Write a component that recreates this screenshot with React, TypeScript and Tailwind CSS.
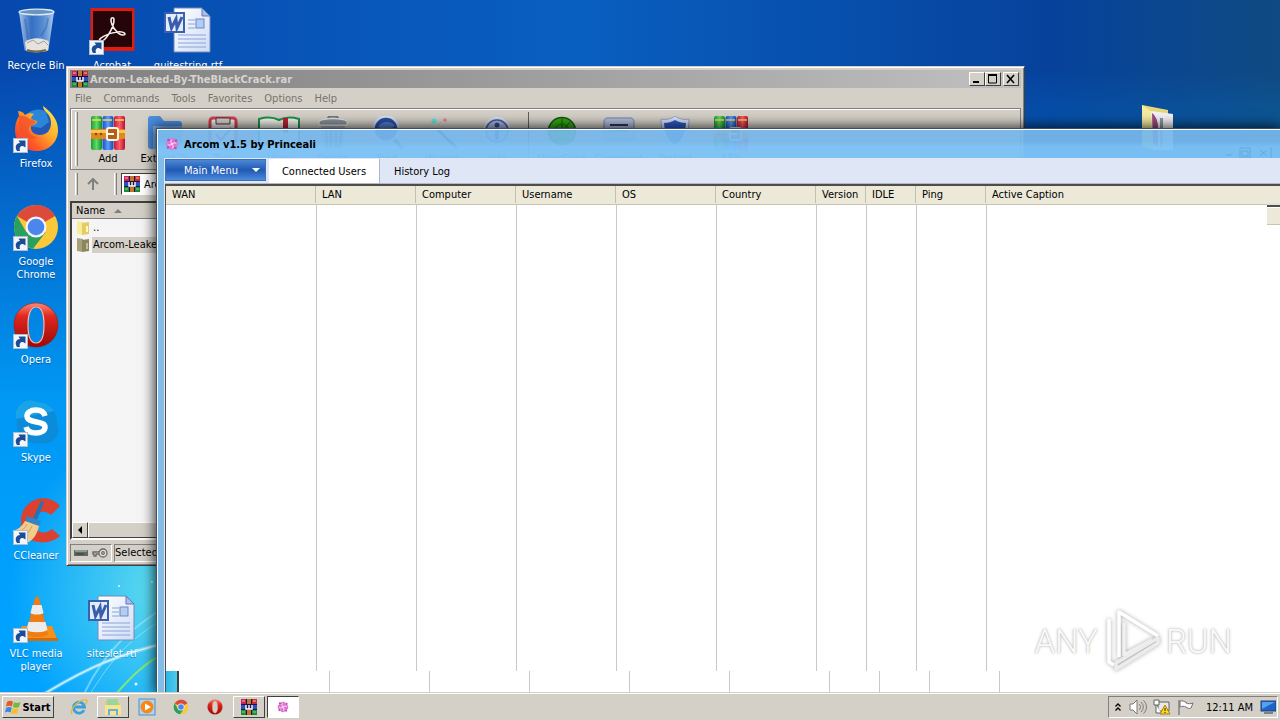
import type { ReactNode } from 'react';

const raised =
  'border border-t-white border-l-white border-r-[#404040] border-b-[#404040] bg-[#d4d0c8]';

/* ---------- icons ---------- */

function BooksIcon({ className }: { className?: string }) {
  return (
    <svg viewBox="0 0 34 34" className={className} aria-hidden="true">
      <defs>
        <linearGradient id="bk-g" x1="0" x2="1"><stop offset="0" stopColor="#1c9a3a" /><stop offset=".5" stopColor="#5fdc62" /><stop offset="1" stopColor="#128a32" /></linearGradient>
        <linearGradient id="bk-b" x1="0" x2="1"><stop offset="0" stopColor="#1a4fc0" /><stop offset=".5" stopColor="#5aa0ff" /><stop offset="1" stopColor="#1746a8" /></linearGradient>
        <linearGradient id="bk-r" x1="0" x2="1"><stop offset="0" stopColor="#c01c3c" /><stop offset=".5" stopColor="#ff5c6c" /><stop offset="1" stopColor="#b01430" /></linearGradient>
      </defs>
      <rect x="0" y="0" width="11" height="34" rx="2" fill="url(#bk-g)" />
      <rect x="11.5" y="0" width="11" height="34" rx="2" fill="url(#bk-b)" />
      <rect x="23" y="0" width="11" height="34" rx="2" fill="url(#bk-r)" />
      <path d="M1 4h9M12 4h9M24 4h9" stroke="#f6d850" strokeWidth="1.4" />
      <rect x="0" y="13" width="34" height="10" rx="1.5" fill="#e08a1c" />
      <rect x="0" y="14" width="34" height="3" fill="#ffc252" />
      <rect x="16" y="12" width="11" height="12" rx="2" fill="#b5601a" stroke="#fff3dc" strokeWidth="2" />
      <path d="M15 18h8" stroke="#fff" strokeWidth="2" />
      <circle cx="5" cy="18" r="1.300" fill="#8a4a10" />
      <circle cx="10" cy="18" r="1.300" fill="#8a4a10" />
    </svg>
  );
}

function RarIcon({ className }: { className?: string }) {
  return (
    <svg viewBox="0 0 16 16" className={className} aria-hidden="true">
      <rect width="16" height="16" fill="#20104a" />
      <path d="M0 0h5v5H0z" fill="#c8245c" />
      <path d="M6 0h4v5H6z" fill="#3aa05a" />
      <path d="M11 0h5v5h-5z" fill="#c83030" />
      <path d="M0 6h5v4H0zM11 6h5v4h-5z" fill="#2a50c0" />
      <path d="M0 11h5v5H0zM11 11h5v5h-5z" fill="#1f8a38" />
      <path d="M6 0h4v5H6zM6 11h4v5H6z" fill="#c07828" />
      <path d="M1 2h3M12 2h3" stroke="#ffb0c0" />
      <path d="M1 13h3M12 13h3" stroke="#7ce07c" />
      <path d="M5 6v4h6V6M8 6v4" stroke="#fff" strokeWidth="1.400" fill="none" />
    </svg>
  );
}

function SwirlIcon({ className }: { className?: string }) {
  return (
    <svg viewBox="0 0 16 16" className={className} aria-hidden="true">
      <g fill="#e070d4">
        <path d="M8 8C3.500 6 5 1.500 9 2c3 1 2 5-1 6z" />
        <path d="M8 8c2-4.500 6.500-3 6 1-1 3-5 2-6-1z" />
        <path d="M8 8c4.500 2 3 6.500-1 6-3-1-2-5 1-6z" />
        <path d="M8 8c-2 4.500-6.500 3-6-1 1-3 5-2 6 1z" />
      </g>
      <g fill="#c048b8"><circle cx="4.500" cy="4" r="1.300" /><circle cx="12" cy="4.500" r="1.300" /><circle cx="11.500" cy="12" r="1.300" /><circle cx="4" cy="11.500" r="1.300" /></g>
      <path d="M8 8C6.500 6.500 6.500 4.500 8 3.500M8 8c1.500-1.500 3.500-1.500 4.500 0M8 8c1.500 1.500 1.500 3.500 0 4.500M8 8c-1.500 1.500-3.500 1.500-4.500 0" stroke="#fff0fc" fill="none" />
    </svg>
  );
}

function ChromeIcon({ className }: { className?: string }) {
  return (
    <svg viewBox="0 0 48 48" className={className} aria-hidden="true">
      <circle cx="24" cy="24" r="22" fill="#fbc83a" />
      <path d="M24 24 5 13A22 22 0 0 1 43.050 13z" fill="#dc4a3c" />
      <path d="M24 2a22 22 0 0 1 19.050 11H24z" fill="#dc4a3c" />
      <path d="M4.950 13A22 22 0 0 0 21 45.800L33.500 29.500 24 24 14.500 29.500z" fill="#27a060" />
      <circle cx="24" cy="24" r="10.500" fill="#f4f4f4" />
      <circle cx="24" cy="24" r="8.300" fill="#4a86ee" />
    </svg>
  );
}

function OperaIcon({ className }: { className?: string }) {
  return (
    <svg viewBox="0 0 48 48" className={className} aria-hidden="true">
      <defs>
        <linearGradient id="op" x1="0" y1="0" x2="0" y2="1"><stop offset="0" stopColor="#ff8a78" /><stop offset=".3" stopColor="#e0281e" /><stop offset="1" stopColor="#9c0808" /></linearGradient>
      </defs>
      <path fillRule="evenodd" fill="url(#op)" stroke="#a01810" strokeWidth=".6" d="M24 2C11 2 2 12 2 24s9 22 22 22 22-10 22-22S37 2 24 2zm0 4c5.500 0 8 8 8 18s-2.500 18-8 18-8-8-8-18 2.500-18 8-18z" />
      <path fill="none" stroke="#f8c0b4" strokeWidth="1.200" d="M24 6c5.500 0 8 8 8 18s-2.500 18-8 18-8-8-8-18 2.500-18 8-18z" />
    </svg>
  );
}

function RecycleBin() {
  return (
    <svg viewBox="0 0 48 48" className="size-12" aria-hidden="true">
      <defs>
        <linearGradient id="rb" x1="0" x2="1"><stop offset="0" stopColor="#c4daf2" stopOpacity=".85" /><stop offset=".35" stopColor="#4a80cc" stopOpacity=".7" /><stop offset=".7" stopColor="#6c9edc" stopOpacity=".8" /><stop offset="1" stopColor="#cce0f6" stopOpacity=".85" /></linearGradient>
      </defs>
      <path d="M7 5h35l-5.500 38c-1 3-23 3-24 0z" fill="url(#rb)" />
      <path d="M13 35c6-5 18-5 24 0l-1 8c-3 3-20 3-22 0z" fill="#e6e2dc" />
      <path d="M15 36l6-3 5 4 6-3 4 4" stroke="#9aa0a8" fill="none" />
      <path d="M15 43c4 2 14 2 19 0" stroke="#786850" strokeWidth="2" fill="none" />
      <ellipse cx="24.500" cy="5" rx="17.500" ry="2.800" fill="#6c94c0" stroke="#dceaf8" strokeWidth="1.300" />
      <path d="M13 12l3 20M36 11l-2 10-5 8" stroke="#3468ac" strokeOpacity=".5" strokeWidth="2" fill="none" />
    </svg>
  );
}

function AcrobatIcon() {
  return (
    <svg viewBox="0 0 48 48" className="size-12" aria-hidden="true">
      <rect x="2.500" y="1" width="44" height="43" fill="#e01c10" />
      <rect x="5" y="4" width="39" height="36" fill="#250508" />
      <path d="M12 34c-3-2 8-8 17-9 8-1 10 3 6 3-5 0-12-9-12-15 0-3 3-3 3 0 0 7-9 23-14 21z" fill="none" stroke="#f6eeee" strokeWidth="1.600" />
    </svg>
  );
}

function WordIcon() {
  return (
    <svg viewBox="0 0 48 48" className="size-12" aria-hidden="true">
      <defs><linearGradient id="wd" x1="0" y1="0" x2="1" y2="1"><stop offset="0" stopColor="#fff" /><stop offset="1" stopColor="#cfdcf6" /></linearGradient></defs>
      <path d="M10 1h28l8 8v36H10z" fill="url(#wd)" stroke="#7488b8" strokeWidth="1" />
      <path d="M38 1v8h8z" fill="#a8bfe8" stroke="#6078b0" />
      <path d="M24 13h7M24 17h7M24 21h7M14 28h28M14 32h28M14 36h28M14 40h28" stroke="#8ca4d8" strokeWidth="1.200" />
      <rect x="32" y="12" width="8" height="9" fill="#b4ccf0" stroke="#6888c8" />
      <rect x="1" y="6" width="19" height="19" fill="#e4ecfc" stroke="#3c60b0" strokeWidth="2" />
      <path d="M5 10l2.500 11L12 12l1 9 5-11" fill="none" stroke="#3a5cac" strokeWidth="3" />
    </svg>
  );
}

function FirefoxIcon() {
  return (
    <svg viewBox="0 0 48 48" className="size-12" aria-hidden="true">
      <defs>
        <linearGradient id="ff" x1="1" y1="0" x2="0" y2="1"><stop offset="0" stopColor="#fff04c" /><stop offset=".4" stopColor="#ffb02c" /><stop offset=".7" stopColor="#ff5a24" /><stop offset="1" stopColor="#e8205c" /></linearGradient>
      </defs>
      <circle cx="27" cy="20" r="15" fill="#2458b8" />
      <path d="M15 9c5-5 14-6 19-2l3 10-8 6-12-2z" fill="#2a86d8" />
      <path d="M31 1c8 6 15 13 15 24 0 12-9 21-21 21S3 38 3 25c0-5 1-9 4-14l-1-5c3 0 5 1 7 4 3-2 6-2 9-1-2 2-3 3-3 5l6 2c0 3-3 4-6 5-1 5 3 9 9 9 7 0 11-5 11-12 0-6-3-9-5-11-2-2-3-4-3-6z" fill="url(#ff)" />
      <path d="M7 11c3-1 8 0 11 3l6 2c0 3-3 4-6 5-4 5 1 11 8 11-8 5-19 0-19-12z" fill="#f0502c" opacity=".75" />
    </svg>
  );
}

function SkypeIcon() {
  return (
    <svg viewBox="0 0 48 48" className="size-12" aria-hidden="true">
      <path d="M14 2c5-2 9 0 11 1 12 0 21 9 20 22 5 11-5 22-17 19C14 47 3 36 5 23 1 14 5 5 14 2z" fill="#0c8cd8" />
      <path d="M14 2c5-2 9 0 11 1 8 0 14 4 17 9L4 20C2 13 6 5 14 2z" fill="#18a4e8" />
      <path d="M33 17c-1-4-4-6-9-6-6 0-9 3-9 6 0 8 18 4 18 11 0 4-4 6-9 6-6 0-9-2-10-6" fill="none" stroke="#fff" strokeWidth="5.500" />
    </svg>
  );
}

function CCleanerIcon() {
  return (
    <svg viewBox="0 0 48 48" className="size-12" aria-hidden="true">
      <path d="M48 9l-9 9c-6-6-16-4-17 6-1 11 10 15 18 8l8 7C36 50 9 48 9 24 9 2 35-6 48 9z" fill="#dc4030" />
      <path d="M29 4l3 1-7 18-4-2z" fill="#2474b4" />
      <path d="M15 19l14 5-2 5-14-4z" fill="#3484c4" />
      <path d="M13 24l14 5c-2 9-6 14-12 17L1 34c6-2 9-5 12-10z" fill="#f2cc8c" />
      <path d="M15 27c-3 6-7 8-10 9M20 29c-3 7-6 9-10 12" stroke="#d0a058" fill="none" />
    </svg>
  );
}

function VlcIcon() {
  return (
    <svg viewBox="0 0 48 48" className="size-12" aria-hidden="true">
      <path d="M10 31h30l5 13H3z" fill="#f69018" />
      <path d="M3 43h43v3H3z" fill="#d46c0c" />
      <path d="M23 3c1-2 3-2 4 0l9 36c-2 4-20 4-22 0z" fill="#f07c14" />
      <path d="M20.500 10h9l2 8c-3 2-10 2-13 0zM16.500 27h17l2 8c-4 3-17 3-21 0z" fill="#ececec" />
    </svg>
  );
}

function FolderIcon() {
  return (
    <svg viewBox="0 0 48 48" className="size-12" aria-hidden="true">
      <path d="M5 1l26 5v10H5z" fill="#e8d878" />
      <path d="M5 1l11 8v37L5 42z" fill="#f6eca0" />
      <path d="M14 7l22 3v36H16z" fill="#f2f2f6" />
      <path d="M15 9c4 3 6 9 6 14v20l-5-3z" fill="#a04a7c" />
      <path d="M23 14h3v30h-3z" fill="#8c98ac" />
    </svg>
  );
}

function ShortcutArrow() {
  return (
    <svg viewBox="0 0 15 15" className="absolute bottom-0 left-px size-[15px]" aria-hidden="true">
      <rect x=".5" y=".5" width="14" height="14" fill="#f2f6fa" stroke="#b0bcc8" />
      <path d="M4 13C1 8 4 5 7 5L5.500 2.500H12.500V9.500L10 8C7 8 6 10 7 13z" fill="#1c4c98" />
    </svg>
  );
}

/* ---------- desktop ---------- */

type Shortcut = { label: string; place: string; icon: ReactNode; arrow?: boolean };

const shortcuts: Shortcut[] = [
  { label: 'Recycle Bin', place: 'col-start-1 row-start-1', icon: <RecycleBin /> },
  { label: 'Acrobat', place: 'col-start-2 row-start-1', icon: <AcrobatIcon />, arrow: true },
  { label: 'quitestring.rtf', place: 'col-start-3 row-start-1', icon: <WordIcon /> },
  { label: 'Firefox', place: 'col-start-1 row-start-2', icon: <FirefoxIcon />, arrow: true },
  { label: 'Google Chrome', place: 'col-start-1 row-start-3', icon: <ChromeIcon className="size-12" />, arrow: true },
  { label: 'Opera', place: 'col-start-1 row-start-4', icon: <OperaIcon className="size-12" />, arrow: true },
  { label: 'Skype', place: 'col-start-1 row-start-5', icon: <SkypeIcon />, arrow: true },
  { label: 'CCleaner', place: 'col-start-1 row-start-6', icon: <CCleanerIcon />, arrow: true },
  { label: 'VLC media player', place: 'col-start-1 row-start-7', icon: <VlcIcon />, arrow: true },
  { label: 'siteslet.rtf', place: 'col-start-2 row-start-7', icon: <WordIcon /> },
];

function DesktopIcons() {
  return (
    <div className="grid w-max auto-rows-[98px] grid-cols-[72px_72px_72px] gap-x-1">
      {shortcuts.map((s) => (
        <a key={s.label} href="#" className={`${s.place} flex flex-col items-center gap-1 pt-[7px] text-center text-white [text-shadow:0_1px_1px_#00306a80]`}>
          <span className="relative">
            {s.icon}
            {s.arrow && <ShortcutArrow />}
          </span>
          <span className="w-16 leading-[13px]">
            <span className="-mx-2 block px-1">{s.label}</span>
          </span>
        </a>
      ))}
    </div>
  );
}

function Wallpaper() {
  return (
    <svg viewBox="0 0 200 160" className="absolute bottom-0 left-0 h-40 w-[200px]" aria-hidden="true">
      <g fill="none" strokeLinecap="round">
        <path d="M44 162C90 134 120 122 170 110" stroke="#d8f6ff" strokeWidth="4" opacity=".35" />
        <path d="M44 162C90 134 120 122 170 110" stroke="#e8fbff" strokeWidth="1.600" opacity=".8" />
        <path d="M84 162C104 120 130 96 170 72" stroke="#b8f0ff" strokeWidth="2" opacity=".5" />
        <path d="M90 162C110 130 130 104 170 84" stroke="#c8f4ff" opacity=".5" />
        <path d="M116 162C130 146 145 130 170 118" stroke="#90f060" strokeWidth="2" opacity=".85" />
      </g>
      <g fill="#e8fbff"><circle cx="119" cy="54" r="1" /><circle cx="136" cy="152" r="1.500" /><circle cx="152" cy="50" r="1" /></g>
    </svg>
  );
}

/* ---------- archive window ---------- */

type Tool = { name: string; width: string; icon: ReactNode };

const toolGroupA: Tool[] = [
  { name: 'Add', width: 'w-14', icon: <BooksIcon className="size-[34px]" /> },
  {
    name: 'Extract To', width: 'w-[58px]',
    icon: (
      <svg viewBox="0 0 34 34" className="size-[34px]"><path d="M0 3c0-2 1-3 3-3h9l4 5h15c2 0 3 1 3 3v22c0 2-1 3-3 3H3c-2 0-3-1-3-3z" fill="#4c8ee0" /><path d="M5 10h29v20c0 2-1 3-3 3H5z" fill="#7cb4f4" /></svg>
    ),
  },
  {
    name: 'Test', width: 'w-[58px]',
    icon: (
      <svg viewBox="0 0 34 34" className="size-[34px]"><rect x="4" y="2" width="26" height="31" rx="3" fill="#f6f0f0" stroke="#d04050" strokeWidth="3" /><path d="M10 2h14v6H10z" fill="#d8d0d0" stroke="#503038" /><path d="M10 18l5 6 10-12" stroke="#c04050" strokeWidth="2" fill="none" /></svg>
    ),
  },
  {
    name: 'View', width: 'w-[54px]',
    icon: (
      <svg viewBox="0 0 42 34" className="h-[34px] w-[42px]"><path d="M1 3c7-2 14-2 20 1 6-3 13-3 20-1v26c-7-2-14-2-20 1-6-3-13-3-20-1z" fill="#f4f8f0" stroke="#1c9448" strokeWidth="2" /><path d="M25 2h5v16l-3-3-2 3z" fill="#c02434" /></svg>
    ),
  },
  {
    name: 'Delete', width: 'w-[54px]',
    icon: (
      <svg viewBox="0 0 34 34" className="size-[34px]"><path d="M12 2c0-2 10-2 10 0" stroke="#707880" fill="none" strokeWidth="2" /><path d="M3 5c6-3 22-3 28 0v4H3z" fill="#8c949c" stroke="#e8ecf0" /><path d="M5 10h24l-3 23H8z" fill="#a8b0b8" /><path d="M10 12l1 20M15 12v20M20 12v20M25 12l-1 20" stroke="#606870" strokeWidth="2" /></svg>
    ),
  },
  {
    name: 'Find', width: 'w-[54px]',
    icon: (
      <svg viewBox="0 0 34 34" className="size-[34px]"><path d="M24 23l9 10" stroke="#4c5870" strokeWidth="4" /><circle cx="16" cy="13" r="12.500" fill="#2850a8" stroke="#d4e0f4" strokeWidth="2.500" /><path d="M8 11c2-6 14-7 17-1-4 3-12 4-17 1z" fill="#5880cc" /></svg>
    ),
  },
  {
    name: 'Wizard', width: 'w-14',
    icon: (
      <svg viewBox="0 0 34 34" className="size-[34px]"><path d="M13 14l19 18" stroke="#303848" strokeWidth="3" /><circle cx="9" cy="5" r="2.500" fill="#58e8d8" /><circle cx="20" cy="4" r="1.800" fill="#f08088" /><path d="M5 13l4 1M13 9l3-3" stroke="#a0c8d8" /></svg>
    ),
  },
  {
    name: 'Info', width: 'w-[54px]',
    icon: (
      <svg viewBox="0 0 34 34" className="size-[34px]"><circle cx="17" cy="15" r="13.500" fill="#c4cee8" stroke="#e4eaf8" /><circle cx="17" cy="15" r="11" fill="#aebce0" stroke="#4860a4" strokeWidth="1.500" /><circle cx="17" cy="9" r="2.500" fill="#304c98" /><path d="M17 13v11" stroke="#304c98" strokeWidth="4" /></svg>
    ),
  },
];

const toolGroupB: Tool[] = [
  {
    name: 'VirusScan', width: 'w-[58px]',
    icon: (
      <svg viewBox="0 0 34 34" className="size-[34px]"><circle cx="17" cy="15" r="13.500" fill="#34a818" stroke="#145c08" strokeWidth="1.500" /><path d="M17 2v13l8-9M17 15H4" stroke="#106008" fill="none" /><circle cx="17" cy="15" r="7" fill="none" stroke="#187010" /></svg>
    ),
  },
  {
    name: 'Comment', width: 'w-14',
    icon: (
      <svg viewBox="0 0 34 34" className="size-[34px]"><rect x="2" y="2" width="30" height="22" rx="4" fill="#b4c0dc" stroke="#8c9ac0" strokeWidth="1.500" /><path d="M8 9h18" stroke="#283860" strokeWidth="2" /><path d="M8 15h18" stroke="#7484ac" strokeWidth="2" /></svg>
    ),
  },
  {
    name: 'Protect', width: 'w-14',
    icon: (
      <svg viewBox="0 0 34 34" className="size-[34px]"><path d="M17 0c4 3 9 4 14 3 0 14-3 24-14 30C6 27 3 17 3 3c5 1 10 0 14-3z" fill="#dce6f8" stroke="#90a4d0" /><path d="M17 4c3 2 7 3 11 3-1 11-3 17-11 22C9 24 7 18 6 7c4 0 8-1 11-3z" fill="#2c5cd0" /></svg>
    ),
  },
  { name: 'SFX', width: 'w-14', icon: <BooksIcon className="size-[34px]" /> },
];

function Grip() {
  return <span className="w-[3px] shrink-0 self-stretch border-r border-l border-r-[#808080] border-l-white" />;
}

function CaptionButton({ label, children }: { label: string; children: ReactNode }) {
  return (
    <button type="button" aria-label={label} className={`${raised} flex h-[14px] w-4 items-center justify-center`}>
      <svg viewBox="0 0 12 10" className="h-[10px] w-3" fill="none" stroke="#000" strokeWidth="2">{children}</svg>
    </button>
  );
}

function ToolButton({ tool }: { tool: Tool }) {
  return (
    <button type="button" className={`${tool.width} flex flex-col items-center gap-[2px] pt-1 whitespace-nowrap`}>
      {tool.icon}
      <span>{tool.name}</span>
    </button>
  );
}

function ArchiveWindow() {
  return (
    <section className="absolute top-[66px] left-[66px] flex h-[500px] w-[959px] flex-col border border-t-[#d4d0c8] border-r-[#404040] border-b-[#404040] border-l-[#d4d0c8] bg-[#d4d0c8] p-[3px] shadow-[inset_1px_1px_0_#fff,inset_-1px_-1px_0_#808080]">
      <header className="flex h-[18px] shrink-0 items-center gap-[2px] bg-linear-to-r from-[#808080] to-[#c0c0c0] px-[2px]">
        <RarIcon className="size-4" />
        <h2 className="flex-1 font-bold text-[#d8d4cc]">Arcom-Leaked-By-TheBlackCrack.rar</h2>
        <div className="flex">
          <CaptionButton label="Minimize"><path d="M2 8h6" /></CaptionButton>
          <CaptionButton label="Maximize"><path d="M1.500 1v8h8V1z" strokeWidth="1" /><path d="M1 1h9" /></CaptionButton>
          <span className="w-[2px]" />
          <CaptionButton label="Close"><path d="M2 1l7 8M9 1L2 9" strokeWidth="1.600" /></CaptionButton>
        </div>
      </header>
      <nav className="flex h-5 shrink-0 items-center gap-3 px-[5px] text-[#77736c]">
        {['File', 'Commands', 'Tools', 'Favorites', 'Options', 'Help'].map((m) => (
          <button key={m} type="button">{m}</button>
        ))}
      </nav>
      <div className="flex h-[62px] shrink-0 border border-[#808080] px-1 py-[3px] shadow-[inset_1px_1px_0_#fff]">
        <Grip />
        <div className="ml-[2px] flex">
          {toolGroupA.map((t) => <ToolButton key={t.name} tool={t} />)}
          <span className="mx-1 w-px bg-[#606060]" />
          {toolGroupB.map((t) => <ToolButton key={t.name} tool={t} />)}
        </div>
      </div>
      <div className="flex h-7 shrink-0 items-stretch px-[5px] py-[3px]">
        <Grip />
        <button type="button" aria-label="Up one level" className="flex w-[30px] items-center justify-center">
          <svg viewBox="0 0 12 12" className="size-3" fill="none" stroke="#808080" strokeWidth="2"><path d="M6 12V2M1 6l5-5 5 5" /></svg>
        </button>
        <span className="w-[6px]" />
        <Grip />
        <div className="ml-1 flex flex-1 items-center gap-1 border border-t-[#404040] border-r-white border-b-white border-l-[#404040] bg-white px-[2px]">
          <RarIcon className="size-4" />
          <span>Arcom</span>
        </div>
      </div>
      <div className="mt-[3px] flex min-h-0 flex-1 flex-col border-2 border-t-[#404040] border-r-white border-b-white border-l-[#404040] bg-[#f5f5f5]">
        <div className="flex h-4 shrink-0 items-center gap-[9px] border-b border-b-[#808080] bg-[#d4d0c8] px-1">
          <span>Name</span>
          <svg viewBox="0 0 8 4" className="h-1 w-2"><path d="M4 0l4 4H0z" fill="#808080" /></svg>
        </div>
        <ul className="flex-1">
          {['..', 'Arcom-Leaked-By-TheBlackCrack'].map((n, i) => (
            <li key={n} className="flex h-[17px] items-center gap-[2px] px-1">
              <svg viewBox="0 0 14 16" className="h-4 w-[14px]">
                <path d="M1 1l6 1v13l-6-1z" fill={i ? '#a8a078' : '#f8ec98'} />
                <path d="M6 3l7-1v12l-7 1z" fill={i ? '#8c865c' : '#e4cc60'} />
                <path d="M10 6h2v6h-2z" fill={i ? '#c4bca0' : '#fff8c8'} />
              </svg>
              <span className={i ? 'flex-1 bg-[#d4d0c8] px-px leading-4' : 'flex-1 px-px leading-4'}>{n}</span>
            </li>
          ))}
        </ul>
        <div className="flex h-4 shrink-0 bg-[#e8e6e0]">
          <button type="button" aria-label="Scroll left" className={`${raised} flex w-4 items-center justify-center`}>
            <svg viewBox="0 0 4 8" className="h-2 w-1"><path d="M4 0v8L0 4z" /></svg>
          </button>
          <span className={`${raised} w-3/4`} />
        </div>
      </div>
      <footer className="mt-1 flex h-[18px] shrink-0 gap-[2px]">
        <div className="flex w-[42px] items-center justify-center gap-1 border border-t-[#808080] border-r-white border-b-white border-l-[#808080]">
          <svg viewBox="0 0 14 6" className="h-[6px] w-[14px]"><rect width="14" height="6" fill="#606864" /><path d="M1 1h12" stroke="#c0c8c4" /><path d="M2 4h8" stroke="#303834" /></svg>
          <svg viewBox="0 0 16 10" className="h-[10px] w-4" fill="none" stroke="#686864" strokeWidth="1.300"><circle cx="11" cy="5" r="4" fill="#e4e2dc" /><circle cx="11" cy="5" r="1.300" /><path d="M7 4H1v2h1v2h2V6h3" fill="#e4e2dc" /></svg>
        </div>
        <p className="flex-1 border border-t-[#808080] border-r-white border-b-white border-l-[#808080] leading-4">Selected</p>
      </footer>
    </section>
  );
}

/* ---------- main application window ---------- */

const columns = [
  { name: 'WAN', width: 'w-[150px]' },
  { name: 'LAN', width: 'w-[100px]' },
  { name: 'Computer', width: 'w-[100px]' },
  { name: 'Username', width: 'w-[100px]' },
  { name: 'OS', width: 'w-[100px]' },
  { name: 'Country', width: 'w-[100px]' },
  { name: 'Version', width: 'w-[50px]' },
  { name: 'IDLE', width: 'w-[50px]' },
  { name: 'Ping', width: 'w-[70px]' },
  { name: 'Active Caption', width: 'w-auto' },
];

const trailWidths = ['w-[151px]', 'w-[100px]', 'w-[100px]', 'w-[100px]', 'w-[100px]', 'w-[100px]', 'w-[50px]', 'w-[50px]', 'w-[70px]'];

function MainWindow() {
  return (
    <section className="absolute top-32 right-0 bottom-0 left-[156px] flex flex-col border-t border-l border-[#34506c] shadow-[0_0_12px_2px_rgba(0,0,0,0.75)]">
      <header className="flex h-[29px] shrink-0 items-center gap-1 border-t border-l border-white bg-linear-to-b from-[#76b6ea]/93 from-40% to-[#7cc2f6]/96 to-60% px-[6px]">
        <SwirlIcon className="size-4" />
        <h1 className="flex-1 font-bold">Arcom v1.5 by Princeali</h1>
        <svg viewBox="0 0 50 12" className="h-3 w-[50px] self-end" fill="none" stroke="#68a8d8" aria-hidden="true">
          <path d="M2 9h6M16 2h10v10H16zM18 5h6v5h-6zM36 4l7 6M43 4l-7 6M47 1v11" />
        </svg>
      </header>
      <div className="flex min-h-0 flex-1">
        <div className="w-2 shrink-0 border-r border-l border-r-[#dfe7f6] border-l-white bg-[#84bce8]" />
        <div className="flex min-w-0 flex-1 flex-col">
          <nav className="flex h-[26px] shrink-0 items-end border-b border-[#b4b8c4] bg-[#dfe7f6]">
            <button type="button" className="mb-[2px] flex h-[22px] w-[101px] items-center border border-[#3c70b8] bg-linear-to-b from-[#4c88d4] via-[#2058b4] to-[#4c8cdc] pr-[5px] text-white">
              <span className="flex-1 pr-1 pl-2 text-center">Main Menu</span>
              <svg viewBox="0 0 8 4" className="h-1 w-2"><path d="M0 0h8L4 4z" fill="#fff" /></svg>
            </button>
            <button type="button" className="ml-[3px] h-6 w-[111px] border-r border-[#a8b8d4] bg-white">Connected Users</button>
            <button type="button" className="h-6 px-[14px]">History Log</button>
          </nav>
          <div className="flex min-h-0 flex-1 border-t-2 border-l border-t-[#504c48] border-l-[#504c48] bg-white">
            <table className="h-full w-full table-fixed border-collapse">
              <thead>
                <tr className="h-[18px] bg-[#ece9d8]">
                  {columns.map((c) => (
                    <th key={c.name} scope="col" className={`${c.width} border-b border-[#c8c4b0] p-0 text-left font-normal last:[&>span]:border-r-0`}>
                      <span className="block overflow-hidden border-r border-[#c4c0b0] pt-px pl-[6px] leading-4 whitespace-nowrap">{c.name}</span>
                    </th>
                  ))}
                </tr>
              </thead>
              <tbody>
                <tr>
                  {columns.map((c) => <td key={c.name} className="border-r border-[#c8c8c8] p-0 last:border-r-0" />)}
                </tr>
              </tbody>
            </table>
          </div>
          <div className="flex h-[21px] shrink-0 border-l border-[#504c48] bg-white">
            <span className="w-[11px] bg-linear-to-r from-[#28b8e4] to-[#50c8ec]" />
            <span className="w-[2px] bg-[#404040]" />
            {trailWidths.map((w, i) => <span key={i} className={`${w} border-r border-[#c8c8c8]`} />)}
          </div>
        </div>
      </div>
      <div className="absolute top-[76px] right-0 h-[20px] w-[13px] border-t-2 border-[#504c48] bg-white pt-px shadow-[0_-2px_0_#e4e2dc]">
        <div className="h-[17px] border-b border-[#c8c4b0] bg-[#ece9d8]" />
      </div>
    </section>
  );
}

/* ---------- watermark ---------- */

function Watermark() {
  return (
    <div className="absolute right-12 bottom-5 flex h-[62px] items-center gap-1 font-['Roboto',sans-serif] text-[33px] leading-none font-light text-[#fafafa] [text-shadow:0_0_3px_#b0b0b0,0_0_1px_#c8c8c8]">
      <span>ANY</span>
      <svg viewBox="0 0 60 64" className="h-16 w-[60px] drop-shadow-[0_0_2px_#a8a8a8]" fill="none" stroke="#fff" strokeWidth="3.500" strokeLinejoin="round">
        <path d="M17 48V3L56 27" />
        <path d="M22 14v32l28-15" stroke="#f0f0f0" />
        <path d="M7 10v43l5 3" />
        <path d="M14 54v6l42-26v-5L14 54z" stroke="#ececec" />
      </svg>
      <span>RUN</span>
    </div>
  );
}

/* ---------- taskbar ---------- */

function ExplorerIcon() {
  return (
    <svg viewBox="0 0 18 18" className="size-[18px]"><path d="M1 3h6l1 2h8v11H1z" fill="#e8c860" /><path d="M3 1h11v6H3z" fill="#9cd4a0" /><path d="M1 7h16v10H1z" fill="#f8e48c" /><path d="M4 17v-6h10v6h-2v-4H6v4z" fill="#68b0e0" /></svg>
  );
}

function IeIcon() {
  return (
    <svg viewBox="0 0 18 18" className="size-[18px]" fill="none"><path d="M14 12a5.500 5.500 0 1 1 .5-3H5" stroke="#38a0e0" strokeWidth="2.800" /><path d="M2 16C-1 12 9 1 16 2c2 1 0 4-1 5" stroke="#e8b83c" strokeWidth="1.400" /></svg>
  );
}

function MediaIcon() {
  return (
    <svg viewBox="0 0 18 18" className="size-[18px]"><rect x="1" y="1" width="16" height="16" fill="#b0d4f0" stroke="#4890cc" /><circle cx="9" cy="9" r="6.500" fill="#f48818" /><path d="M7 5.500v7L13 9z" fill="#fff" /></svg>
  );
}

function Taskbar() {
  const apps: { name: string; icon: ReactNode; look: string }[] = [
    { name: 'Internet Explorer', icon: <IeIcon />, look: '' },
    { name: 'File Explorer', icon: <ExplorerIcon />, look: raised },
    { name: 'Media Player', icon: <MediaIcon />, look: '' },
    { name: 'Chrome', icon: <ChromeIcon className="size-4" />, look: '' },
    { name: 'Opera', icon: <OperaIcon className="size-4" />, look: '' },
    { name: 'WinRAR', icon: <RarIcon className="size-4" />, look: raised },
    { name: 'Arcom', icon: <SwirlIcon className="size-[14px]" />, look: 'border border-t-[#404040] border-l-[#404040] border-r-white border-b-white bg-white' },
  ];
  return (
    <footer className="relative flex h-7 shrink-0 items-center border-t border-[#d4d0c8] bg-[#d4d0c8] px-[2px] pt-px shadow-[inset_0_1px_0_#fff]">
      <button type="button" className={`${raised} flex h-[22px] w-[52px] items-center justify-center gap-px font-bold`}>
        <svg viewBox="0 0 16 16" className="size-4" aria-hidden="true">
          <path d="M2 3c2-1.500 4-1.500 6-.2L6.800 7.500C5 6.500 3 6.500 1 7.700z" fill="#e85828" />
          <path d="M9 3.200c2 1 4 1 6.500-.2L14 8c-2 1-4 1-6.200 0z" fill="#78b838" />
          <path d="M1 9c2-1.200 4-1.200 5.800-.2L5.500 13.500c-2-1-3.500-1-5.500 0z" fill="#3c88dc" />
          <path d="M7.500 9.300c2 1 4 1 6.200 0l-1.400 4.900c-2 1-4 1-6.200 0z" fill="#f8c028" />
        </svg>
        <span>Start</span>
      </button>
      <div className="ml-[9px] flex flex-1 gap-[2px]">
        {apps.map((a) => (
          <button key={a.name} type="button" aria-label={a.name} className={`${a.look} flex h-[22px] w-8 items-center justify-center`}>{a.icon}</button>
        ))}
      </div>
      <div className="flex h-[22px] items-center border border-t-[#808080] border-r-white border-b-white border-l-[#808080] pl-1">
        <button type="button" aria-label="Show hidden icons" className="flex w-[10px] justify-center">
          <svg viewBox="0 0 6 9" className="h-[9px] w-[6px]" fill="none" stroke="#000" strokeWidth="1.300"><path d="M.5 3.500L3 1l2.500 2.500M.5 7.500L3 5l2.500 2.500" /></svg>
        </button>
        <svg viewBox="0 0 18 16" className="ml-[6px] h-4 w-[18px]" fill="none" stroke="#787874"><path d="M1 5h3l4-4v14l-4-4H1z" fill="#fff" /><path d="M10 5c2 2 2 4 0 6M12 3c3 3 3 7 0 10M14.500 1.500c4 4 4 9 0 13" /></svg>
        <svg viewBox="0 0 18 16" className="ml-[6px] h-4 w-[18px]"><path d="M5 3h11v9H5z" fill="#e8e8e4" stroke="#606060" /><path d="M1 1h5v5H1zM3 6v8h5" fill="#fff" stroke="#606060" /><path d="M12 6l5 9H7z" fill="#fcd828" stroke="#a88010" /><path d="M12 9v3M12 13v1" stroke="#302000" /></svg>
        <svg viewBox="0 0 18 16" className="ml-[6px] h-4 w-[18px]"><path d="M2 1v15" stroke="#808080" strokeWidth="1.500" /><path d="M3 2c3-1 4 1 6 1v1c2 1 4 1 7 0l-2 5c-2 1-4 0-5-1-2-1-4-1-6 0z" fill="#fff" stroke="#707070" /></svg>
        <time className="ml-[11px]">12:11 AM</time>
        <svg viewBox="0 0 16 14" className="mr-px ml-[7px] h-[14px] w-4"><rect x="1" y="1" width="15" height="10" fill="#1c64c8" stroke="#204078" /><path d="M2 2h13L2 9z" fill="#58a0ec" /><path d="M4 13h9" stroke="#606870" strokeWidth="1.500" /></svg>
      </div>
    </footer>
  );
}

export default function App() {
  return (
    <main className="flex h-screen w-full flex-col overflow-hidden font-['DejaVu_Sans_Condensed','Noto_Sans',sans-serif] text-[11px] leading-[13px] text-black">
      <div className="relative min-h-0 flex-1 overflow-hidden bg-[radial-gradient(circle_at_180px_590px,#6ce4ec,transparent_170px),linear-gradient(to_bottom,transparent_70px,#0098f4_400px,#00a2ff_620px),linear-gradient(to_right,#0648ae,#095fc0_45%,#06429c_82%,#0f4a82)]">
        <Wallpaper />
        <DesktopIcons />
        <a href="#" aria-label="Folder" className="absolute top-[104px] right-[95px]"><FolderIcon /></a>
        <ArchiveWindow />
        <MainWindow />
        <Watermark />
      </div>
      <Taskbar />
    </main>
  );
}
